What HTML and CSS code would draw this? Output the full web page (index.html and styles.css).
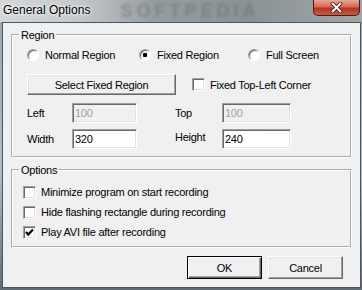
FILE: index.html
```html
<!DOCTYPE html>
<html lang="en">
<head>
    <meta charset="UTF-8">
    <title>General Options</title>
    <link rel="stylesheet" href="styles.css">
</head>
<body>
    <div class="window">
        <div class="titlebar">
            <span class="title">General Options</span>
            <span class="watermark">SOFTPEDIA</span>
            <button class="close" type="button">
                <svg width="13" height="11" viewBox="0 0 13 11">
                    <path d="M2.5 1.5 L10.5 9.5 M10.5 1.5 L2.5 9.5" stroke="#3b1a14" stroke-width="3.6" stroke-linecap="round"/>
                    <path d="M2.5 1.5 L10.5 9.5 M10.5 1.5 L2.5 9.5" stroke="#fff" stroke-width="2" stroke-linecap="round"/>
                </svg>
            </button>
        </div>
        <div class="client">
            <fieldset class="group group-region">
                <legend>Region</legend>
                <div class="group-body">
                    <div class="radio-row">
                        <label class="choice"><input type="radio" name="mode"> Normal Region</label>
                        <label class="choice"><input type="radio" name="mode" checked> Fixed Region</label>
                        <label class="choice"><input type="radio" name="mode"> Full Screen</label>
                    </div>
                    <div class="select-row">
                        <button class="btn btn-select" type="button">Select Fixed Region</button>
                        <label class="check check-corner"><span class="box"></span> Fixed Top-Left Corner</label>
                    </div>
                    <div class="coords">
                        <span class="field-label">Left</span>
                        <input class="field" type="text" value="100" disabled>
                        <span></span>
                        <span class="field-label">Top</span>
                        <input class="field field-wide" type="text" value="100" disabled>
                        <span class="field-label">Width</span>
                        <input class="field" type="text" value="320">
                        <span></span>
                        <span class="field-label raised">Height</span>
                        <input class="field field-wide" type="text" value="240">
                    </div>
                </div>
            </fieldset>
            <fieldset class="group group-options">
                <legend>Options</legend>
                <div class="group-body options-body">
                    <label class="check"><span class="box"></span> Minimize program on start recording</label>
                    <label class="check"><span class="box"></span> Hide flashing rectangle during recording</label>
                    <label class="check"><span class="box">
                        <svg width="11" height="11" viewBox="0 0 11 11"><polyline points="2,5 4.2,7.5 9,2.5" fill="none" stroke="#000" stroke-width="2.2"/></svg>
                    </span> Play AVI file after recording</label>
                </div>
            </fieldset>
            <div class="actions">
                <button class="btn btn-default" type="button">OK</button>
                <button class="btn" type="button">Cancel</button>
            </div>
        </div>
    </div>
</body>
</html>
```

FILE: styles.css
```css
* {
    box-sizing: border-box;
}

body {
    margin: 0;
    font-family: "Liberation Sans", Arial, sans-serif;
    font-size: 11px;
    letter-spacing: -0.25px;
    color: #000;
}

.window {
    width: 362px;
    height: 290px;
    display: flex;
    flex-direction: column;
    padding: 0 1px 2px 2px;
    background: linear-gradient(#9aa6ae, #aebdc8 60%, #5f6c76);
}

.titlebar {
    height: 22px;
    margin: 0 -1px 0 -2px;
    display: flex;
    align-items: flex-start;
    background: linear-gradient(90deg, #d4d7d8 0, #c3c8ca 22%, #979ea2 42%, #8b9296 68%, #9ea6aa 100%);
}

.title {
    padding: 2px 0 0 3px;
    font-size: 12px;
    line-height: 16px;
    letter-spacing: 0;
    white-space: nowrap;
    text-shadow: 0 0 5px #fff, 0 0 3px #fff;
}

.watermark {
    margin: 1px 0 0 30px;
    font-size: 18px;
    font-weight: bold;
    line-height: 21px;
    letter-spacing: 4px;
    color: rgba(88, 96, 100, 0.4);
    filter: blur(1.4px);
    white-space: nowrap;
}

.close {
    flex-shrink: 0;
    margin-left: auto;
    margin-right: 2px;
    width: 47px;
    height: 16px;
    padding: 0;
    display: flex;
    align-items: center;
    justify-content: center;
    border: 1px solid #4b1c14;
    border-top: 0;
    border-radius: 0 0 5px 5px;
    background: linear-gradient(#e8a896, #d26a52 45%, #b8321c 55%, #cc5a3e);
}

.client {
    flex: 1;
    display: flex;
    flex-direction: column;
    padding: 0 8px;
    border: 1px solid #4c5660;
    background: #f0f0f0;
}

.group {
    margin: 0;
    padding: 0;
    min-width: 0;
    border: 2px groove #fff;
}

.group legend {
    margin-left: 6px;
    padding: 0 2px;
    line-height: 14px;
}

.group-region {
    margin-top: 5px;
}

.group-body {
    padding: 6px 0 7px 14px;
}

.radio-row {
    display: grid;
    grid-template-columns: 112px 109px auto;
    height: 14px;
}

.choice {
    display: flex;
    align-items: center;
    gap: 6px;
    line-height: 14px;
}

.choice input {
    appearance: none;
    margin: 0;
    width: 12px;
    height: 12px;
    border-radius: 50%;
    border: 1px solid;
    border-color: #a0a0a0 #fff #fff #a0a0a0;
    box-shadow: inset 1px 1px #696969;
    background: #fff;
}

.choice input:checked {
    background: radial-gradient(circle, #000 0 2px, #fff 2.6px);
}

.select-row {
    display: flex;
    align-items: center;
    margin-top: 12px;
}

.btn {
    width: 75px;
    height: 23px;
    padding: 0;
    font: inherit;
    letter-spacing: inherit;
    color: #000;
    background: #f0f0f0;
    border: 1px solid;
    border-color: #fff #696969 #696969 #fff;
    box-shadow: inset -1px -1px #a0a0a0, inset 1px 1px #e3e3e3;
}

.btn-default {
    border-color: #000;
    box-shadow: inset 1px 1px #fff, inset -1px -1px #696969, inset -2px -2px #a0a0a0;
}

.btn-select {
    width: 149px;
    height: 21px;
}

.check {
    display: flex;
    align-items: center;
    gap: 5px;
    height: 14px;
    line-height: 14px;
}

.check-corner {
    margin-left: 16px;
}

.box {
    width: 13px;
    height: 13px;
    display: flex;
    align-items: center;
    justify-content: center;
    border: 1px solid;
    border-color: #a0a0a0 #fff #fff #a0a0a0;
    box-shadow: inset 1px 1px #696969, inset -1px -1px #e3e3e3;
    background: #fff;
}

.coords {
    display: grid;
    grid-template-columns: 45px 65px 38px 47px 69px;
    grid-auto-rows: 20px;
    row-gap: 6px;
    margin-top: 8px;
    align-items: center;
}

.field-label {
    line-height: 14px;
}

.raised {
    padding-bottom: 4px;
}

.field {
    width: 65px;
    height: 20px;
    margin: 0;
    padding: 0 0 0 2px;
    font: inherit;
    letter-spacing: inherit;
    color: #000;
    background: #fff;
    border: 1px solid;
    border-color: #a0a0a0 #fff #fff #a0a0a0;
    box-shadow: inset 1px 1px #696969, inset -1px -1px #e3e3e3;
}

.field:disabled {
    color: #a0a0a0;
    -webkit-text-fill-color: #a0a0a0;
    background: #f0f0f0;
    opacity: 1;
}

.field-wide {
    width: 69px;
}

.group-options {
    margin-top: 5px;
}

.options-body {
    display: flex;
    flex-direction: column;
    gap: 6px;
    padding: 8px 0 7px 10px;
}

.actions {
    display: flex;
    justify-content: flex-end;
    gap: 6px;
    margin-top: 8px;
    padding-right: 9px;
}
```
